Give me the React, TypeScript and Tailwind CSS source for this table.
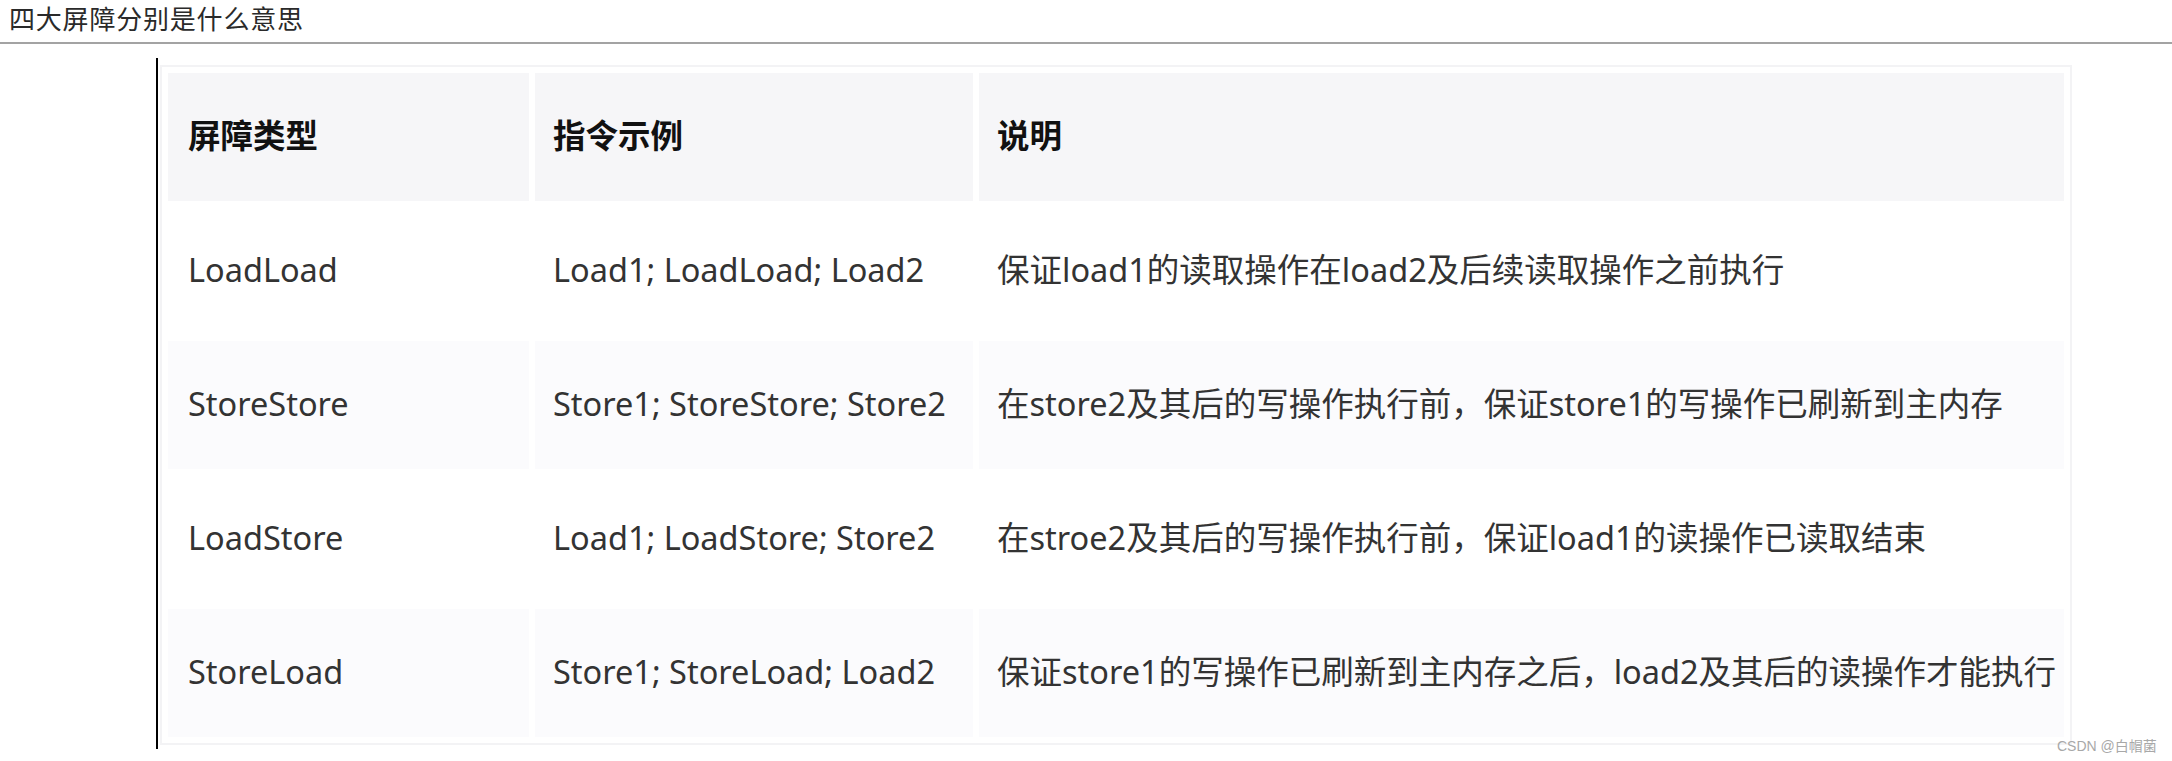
const rows = [
  {
    type: "LoadLoad",
    example: "Load1; LoadLoad; Load2",
    desc: "保证load1的读取操作在load2及后续读取操作之前执行",
  },
  {
    type: "StoreStore",
    example: "Store1; StoreStore; Store2",
    desc: "在store2及其后的写操作执行前，保证store1的写操作已刷新到主内存",
  },
  {
    type: "LoadStore",
    example: "Load1; LoadStore; Store2",
    desc: "在stroe2及其后的写操作执行前，保证load1的读操作已读取结束",
  },
  {
    type: "StoreLoad",
    example: "Store1; StoreLoad; Load2",
    desc: "保证store1的写操作已刷新到主内存之后，load2及其后的读操作才能执行",
  },
];

export default function App() {
  return (
    <div className="relative w-[2172px] h-[761px] bg-white overflow-hidden">
      {/* page title */}
      <div className="h-[44px] border-b-2 border-[#a3a3a3] pl-[9px] flex items-center">
        <span className="text-[26px] leading-none text-[#2a2a2a] font-['Liberation_Serif','Noto_Sans_CJK_SC',serif] tracking-[0.8px]">
          四大屏障分别是什么意思
        </span>
      </div>

      <div className="mt-[14px] ml-[156px] border-l-2 border-black pt-[7px] pb-[4px] w-fit">
        <table className="ml-[2px] w-[1912px] table-fixed border-separate border-spacing-[6px] border-2 border-[#f3f3f5] font-['Noto_Sans','Noto_Sans_CJK_SC',sans-serif] text-[32.5px] text-[#333]">
          <thead>
            <tr>
              <th className="w-[361px] h-[128px] px-[20px] pb-[2px] text-left font-bold text-[#111] bg-[#f6f6f8]">
                屏障类型
              </th>
              <th className="w-[438px] h-[128px] px-[18px] pb-[2px] text-left font-bold text-[#111] bg-[#f6f6f8]">
                指令示例
              </th>
              <th className="h-[128px] px-[18px] pb-[2px] text-left font-bold text-[#111] bg-[#f6f6f8]">
                说明
              </th>
            </tr>
          </thead>
          <tbody>
            {rows.map((r, i) => (
              <tr key={r.type}>
                <td className={`h-[128px] px-[20px] pb-[2px] align-middle whitespace-nowrap ${i % 2 === 1 ? "bg-[#fbfbfd]" : "bg-white"}`}>
                  {r.type}
                </td>
                <td className={`h-[128px] px-[18px] pb-[2px] align-middle whitespace-nowrap ${i % 2 === 1 ? "bg-[#fbfbfd]" : "bg-white"}`}>
                  {r.example}
                </td>
                <td className={`h-[128px] px-[18px] pb-[2px] align-middle whitespace-nowrap ${i % 2 === 1 ? "bg-[#fbfbfd]" : "bg-white"}`}>
                  {r.desc}
                </td>
              </tr>
            ))}
          </tbody>
        </table>
      </div>

      {/* watermark */}
      <div className="absolute left-[2057px] top-[736px] text-[14px] text-[#a8a8a8] font-['Liberation_Sans','Noto_Sans_CJK_SC',sans-serif]">
        CSDN @白帽菌
      </div>
    </div>
  );
}
